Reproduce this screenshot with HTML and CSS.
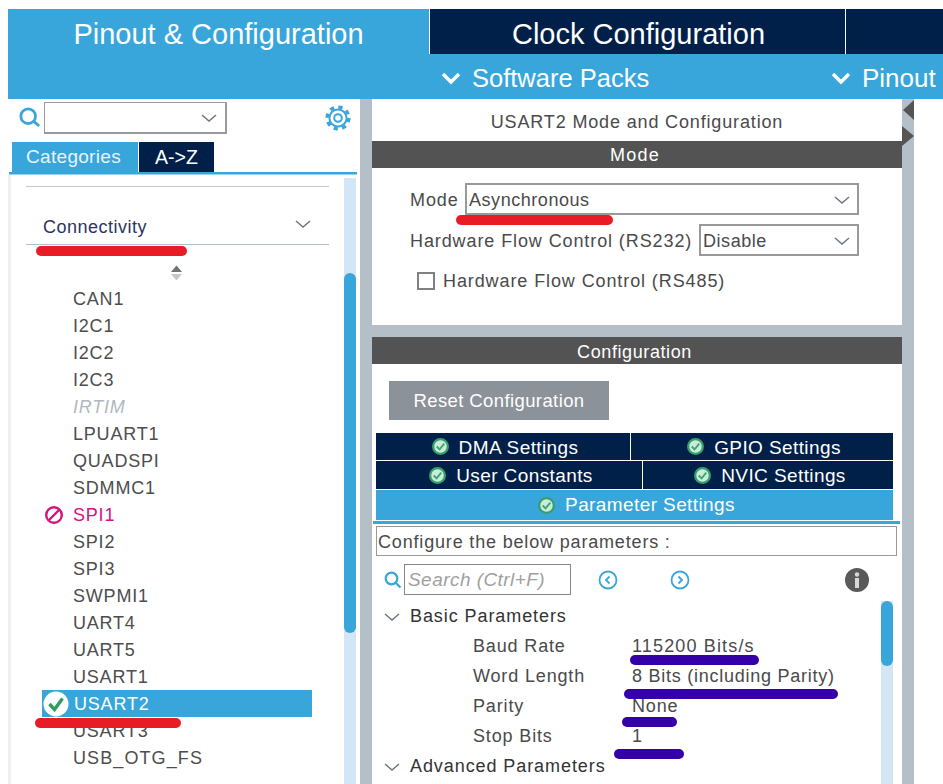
FILE: index.html
```html
<!DOCTYPE html>
<html lang="en">
<head>
<meta charset="utf-8">
<title>USART2 Mode and Configuration</title>
<link rel="stylesheet" href="styles.css">
</head>
<body>
<div class="app">
  <header class="topbar">
    <div class="tabs-main">
      <div class="tab-main tab-active">Pinout &amp; Configuration</div>
      <div class="tab-main tab-clock">Clock Configuration</div>
      <div class="tab-main tab-rest"></div>
    </div>
    <div class="subbar">
      <div class="sub-item sub-packs">
        <svg class="sub-chev" viewBox="0 0 20 14"><path d="M2 3l8 8 8-8" /></svg>
        <span>Software Packs</span>
      </div>
      <div class="sub-item sub-pinout">
        <svg class="sub-chev" viewBox="0 0 20 14"><path d="M2 3l8 8 8-8" /></svg>
        <span>Pinout</span>
      </div>
    </div>
  </header>
  <main class="workspace">
    <aside class="left">
      <div class="search-row">
        <svg class="search-icon" viewBox="0 0 24 24"><circle cx="10" cy="10" r="8" /><path d="M15.5 15.5l6.5 5" /></svg>
        <div class="search-box"><svg class="chev" viewBox="0 0 16 10"><path d="M1 2l7 6 7-6" /></svg></div>
        <svg class="gear" viewBox="0 0 26 26">
          <circle class="gear-teeth" cx="13" cy="13" r="10.9" />
          <circle cx="13" cy="13" r="8.6" />
          <circle cx="13" cy="13" r="3.8" />
        </svg>
      </div>
      <div class="cat-tabs">
        <div class="cat-tab cat-active">Categories</div>
        <div class="cat-tab cat-az">A-&gt;Z</div>
      </div>
      <div class="cat-line"></div>
      <div class="list-wrap">
        <div class="list-main">
          <div class="rule rule-top"></div>
          <div class="group-head">
            <span>Connectivity</span>
            <svg class="chev" viewBox="0 0 16 10"><path d="M1 2l7 6 7-6" /></svg>
          </div>
          <div class="sorter">
            <svg viewBox="0 0 14 16"><path class="up" d="M7 0l6 7H1z" /><path class="down" d="M1 9h12l-6 7z" /></svg>
          </div>
          <ul class="periph">
            <li>CAN1</li>
            <li>I2C1</li>
            <li>I2C2</li>
            <li>I2C3</li>
            <li class="off">IRTIM</li>
            <li>LPUART1</li>
            <li>QUADSPI</li>
            <li>SDMMC1</li>
            <li class="blocked">
              <svg class="no-icon" viewBox="0 0 20 20"><circle cx="10" cy="10" r="7.8" /><path d="M5 15L15 5" /></svg>
              SPI1
            </li>
            <li>SPI2</li>
            <li>SPI3</li>
            <li>SWPMI1</li>
            <li>UART4</li>
            <li>UART5</li>
            <li>USART1</li>
            <li class="selected">
              <svg class="ok-icon" viewBox="0 0 26 26"><circle cx="13" cy="13" r="12.5" /><path d="M6.5 13l5 5.5 8-11" /></svg>
              USART2
            </li>
            <li>USART3</li>
            <li class="wide">USB_OTG_FS</li>
          </ul>
        </div>
        <div class="track left-track"><div class="thumb left-thumb"></div></div>
      </div>
    </aside>

    <section class="center">
      <div class="panel panel-mode">
        <h1 class="panel-title">USART2 Mode and Configuration</h1>
        <div class="bar bar-mode">Mode</div>
        <div class="mode-form">
          <div class="form-row">
            <span>Mode</span>
            <div class="select select-wide">Asynchronous<svg class="chev" viewBox="0 0 16 10"><path d="M1 2l7 6 7-6" /></svg></div>
          </div>
          <div class="form-row">
            <span>Hardware Flow Control (RS232)</span>
            <div class="select select-small">Disable<svg class="chev" viewBox="0 0 16 10"><path d="M1 2l7 6 7-6" /></svg></div>
          </div>
          <div class="check-row"><span class="checkbox"></span><span>Hardware Flow Control (RS485)</span></div>
        </div>
      </div>
      <div class="panel panel-config">
        <div class="bar bar-config">Configuration</div>
        <button class="reset" type="button">Reset Configuration</button>
        <div class="cfg-tabs">
          <div class="cfg-row">
            <div class="cfg-tab w-dma"><svg class="mini-ok" viewBox="0 0 18 18"><circle cx="9" cy="9" r="7.8" /><path d="M5 9l3 3 5-6" /></svg>DMA Settings</div>
            <div class="cfg-tab cfg-grow"><svg class="mini-ok" viewBox="0 0 18 18"><circle cx="9" cy="9" r="7.8" /><path d="M5 9l3 3 5-6" /></svg>GPIO Settings</div>
          </div>
          <div class="cfg-row cfg-row2">
            <div class="cfg-tab w-user"><svg class="mini-ok" viewBox="0 0 18 18"><circle cx="9" cy="9" r="7.8" /><path d="M5 9l3 3 5-6" /></svg>User Constants</div>
            <div class="cfg-tab cfg-grow"><svg class="mini-ok" viewBox="0 0 18 18"><circle cx="9" cy="9" r="7.8" /><path d="M5 9l3 3 5-6" /></svg>NVIC Settings</div>
          </div>
          <div class="cfg-tab cfg-active"><svg class="mini-ok" viewBox="0 0 18 18"><circle cx="9" cy="9" r="7.8" /><path d="M5 9l3 3 5-6" /></svg>Parameter Settings</div>
        </div>
        <div class="cfg-line"></div>
        <div class="hint">Configure the below parameters :</div>
        <div class="tools">
          <svg class="search-small" viewBox="0 0 18 18"><circle cx="7.5" cy="7.5" r="5.8" /><path d="M11.5 11.5l5 5" /></svg>
          <div class="param-search">Search (Ctrl+F)</div>
          <svg class="nav nav-prev" viewBox="0 0 20 20"><circle cx="10" cy="10" r="8.5" /><path d="M11.5 6.5L8 10l3.5 3.5" /></svg>
          <svg class="nav nav-next" viewBox="0 0 20 20"><circle cx="10" cy="10" r="8.5" /><path d="M8.5 6.5L12 10l-3.5 3.5" /></svg>
          <svg class="info" viewBox="0 0 24 24"><circle cx="12" cy="12" r="12" /><rect x="10" y="10" width="4" height="10" /><circle cx="12" cy="6.5" r="2.2" /></svg>
        </div>
        <div class="params">
          <div class="tree">
            <div class="tree-head"><svg class="chev" viewBox="0 0 16 10"><path d="M1 2l7 6 7-6" /></svg>Basic Parameters</div>
            <div class="param"><span>Baud Rate</span><span class="num">115200 Bits/s</span></div>
            <div class="param"><span>Word Length</span><span class="tight">8 Bits (including Parity)</span></div>
            <div class="param"><span>Parity</span><span>None</span></div>
            <div class="param"><span>Stop Bits</span><span>1</span></div>
            <div class="tree-head"><svg class="chev" viewBox="0 0 16 10"><path d="M1 2l7 6 7-6" /></svg>Advanced Parameters</div>
          </div>
          <div class="track param-track"><div class="thumb param-thumb"></div></div>
        </div>
      </div>
    </section>

    <div class="gutter-right">
      <svg viewBox="0 0 12 20"><path d="M12 0v20L1 10z" /></svg>
      <svg viewBox="0 0 12 20"><path d="M0 0v20l12-10z" /></svg>
    </div>
  </main>
</div>
<div class="mark red m-connect"></div>
<div class="mark red m-mode"></div>
<div class="mark red m-usart"></div>
<div class="mark blue m-baud"></div>
<div class="mark blue m-word"></div>
<div class="mark blue m-parity"></div>
<div class="mark blue m-stop"></div>
</body>
</html>
```
FILE: styles.css
```css
* { box-sizing: border-box; }
html, body { margin: 0; height: 784px; overflow: hidden; background: #fff; }
body { font-family: "Liberation Sans", Arial, sans-serif; color: #4a4a4a; position: relative; }
.app { padding: 9px 0 0 8px; height: 784px; display: flex; flex-direction: column; }

.topbar { background: #38a6db; height: 90px; flex: none; }
.tabs-main { display: flex; height: 45px; }
.tab-main { font-size: 29px; color: #fff; line-height: 50px; text-align: center; white-space: nowrap; overflow: hidden; }
.tab-active { width: 421px; line-height: 50px; }
.tab-clock { width: 417px; padding-left: 2px; background: #00204a; border-left: 1px solid #fff; border-right: 1px solid #fff; }
.tab-rest { flex: 1; background: #00204a; }
.subbar { height: 45px; position: relative; display: flex; color: #fff; }
.sub-item { display: flex; align-items: center; gap: 11px; height: 50px; margin-top: -1px; }
.sub-packs { margin-left: 433px; width: 390px; font-size: 25.5px; }
.sub-pinout { font-size: 26px; }
.sub-chev { width: 20px; height: 14px; fill: none; stroke: #fff; stroke-width: 3.4; }

.workspace { flex: 1; display: flex; min-height: 0; background: #fff; }
.left { width: 352px; flex: none; display: flex; flex-direction: column; }

.search-row { height: 43px; display: flex; align-items: flex-start; padding: 3px 0 0 11px; }
.search-icon { width: 22px; height: 24px; margin-top: 4px; fill: none; stroke: #38a6db; stroke-width: 3; }
.search-box { width: 183px; height: 32px; margin-left: 3px; border: 1px solid #9a9a9a; border-right-width: 2px; border-bottom-width: 2px; display: flex; align-items: center; justify-content: flex-end; padding-right: 8px; }
.chev { width: 16px; height: 10px; fill: none; stroke: #6f7680; stroke-width: 1.5; }
.gear { width: 26px; height: 26px; margin: 3px 0 0 98px; fill: none; stroke: #38a6db; stroke-width: 2; }
.gear-teeth { stroke-width: 3.4; stroke-dasharray: 4.28 4.28; }

.cat-tabs { display: flex; height: 30px; margin-left: 4px; flex: none; }
.cat-tab { font-size: 19px; line-height: 30px; text-align: center; color: #fff; }
.cat-active { width: 126px; padding-right: 3px; letter-spacing: .3px; background: #38a6db; color: #e8f4fb; }
.cat-az { width: 75px; margin-left: 1px; font-size: 19.5px; background: #00204a; }
.cat-line { height: 3px; background: #38a6db; margin: 0 3px 0 1px; border-bottom: 1px solid #9dd0ec; flex: none; }

.list-wrap { flex: 1; display: flex; min-height: 0; padding-top: 3px; border-left: 3px solid #f0f0f0; }
.list-main { width: 333px; flex: none; padding: 8px 0 0 15px; }
.rule { height: 1px; }
.rule-top { background: #c8c8c8; width: 303px; }
.group-head { width: 303px; height: 58px; border-bottom: 1px solid #b7bdd0; display: flex; align-items: flex-end; justify-content: space-between; padding: 0 18px 6px 17px; font-size: 18px; letter-spacing: .5px; line-height: 22px; color: #2a3560; }
.group-head .chev { margin-bottom: 9px; }
.sorter { width: 303px; height: 40px; padding: 20px 0 0 144px; }
.sorter svg { display: block; width: 13px; height: 16px; }
.up { fill: #6e7377; }
.down { fill: #c4c7ca; }

.periph { list-style: none; margin: 0; padding: 0 0 0 16px; }
.periph li { height: 27px; padding: 2px 0 0 31px; font-size: 18px; letter-spacing: .8px; position: relative; width: 270px; display: flex; align-items: center; color: #4d4d4d; white-space: nowrap; }
.periph .wide { letter-spacing: 1.1px; }
.periph .off { font-style: italic; color: #b0b8bf; }
.periph .blocked { color: #d5127f; }
.periph .selected { background: #38a6db; color: #fff; padding-left: 32px; }
.no-icon { position: absolute; left: 2px; top: 4px; width: 20px; height: 20px; fill: none; stroke: #d5127f; stroke-width: 2.4; }
.ok-icon { position: absolute; left: 1px; top: 1px; width: 26px; height: 26px; }
.ok-icon circle { fill: #fff; }
.ok-icon path { fill: none; stroke: #2f9e5f; stroke-width: 3.4; }

.track { background: #d4e6f5; width: 12px; flex: none; }
.thumb { background: #38a6db; border-radius: 6px; width: 12px; }
.left-thumb { height: 360px; margin-top: 95px; }

.center { width: 542px; flex: none; background: #b4bfc7; padding-left: 12px; display: flex; flex-direction: column; gap: 12px; }
.panel { background: #fff; width: 530px; }
.panel-mode { height: 226px; flex: none; }
.panel-title { margin: 0; height: 42px; font-size: 18px; font-weight: 400; line-height: 46px; text-align: center; letter-spacing: .85px; color: #4a4a4a; }
.bar { height: 27px; background: #535353; color: #fff; font-size: 18px; line-height: 29px; text-align: center; }
.bar-mode { letter-spacing: 1.2px; padding-right: 4px; }
.bar-config { letter-spacing: .6px; padding-right: 5px; line-height: 31px; }
.mode-form { padding: 15px 43px 0 38px; }
.form-row { display: flex; justify-content: space-between; align-items: center; height: 32px; margin-bottom: 9px; font-size: 18px; letter-spacing: .9px; }
.form-row > span { padding-top: 2px; }
.select { height: 32px; border: 2px solid #999; display: flex; align-items: center; justify-content: space-between; padding: 2px 7px 0 2px; letter-spacing: .55px; background: #fff; }
.select-wide { width: 394px; }
.select-small { width: 160px; }
.check-row { display: flex; align-items: center; gap: 8px; margin: 15px 0 0 7px; font-size: 18px; letter-spacing: .9px; height: 20px; }
.checkbox { width: 18px; height: 18px; border: 2px solid #808080; }

.panel-config { flex: 1; min-height: 0; overflow: hidden; position: relative; }
.reset { display: block; width: 220px; height: 39px; margin: 17px 0 13px 17px; background: #8b9299; border: 0; color: #fff; font: 18.5px "Liberation Sans", Arial, sans-serif; letter-spacing: .4px; padding: 0; }
.cfg-tabs { margin-left: 4px; width: 517px; }
.cfg-row { display: flex; height: 28px; border-bottom: 1px solid #fff; }
.cfg-row2 { height: 29px; }
.cfg-tab { background: #00204a; color: #fff; font-size: 19px; letter-spacing: .4px; padding: 2px 0 0 4px; display: flex; align-items: center; justify-content: center; white-space: nowrap; }
.w-dma { width: 255px; border-right: 1px solid #fff; }
.w-user { width: 267px; border-right: 1px solid #fff; }
.cfg-grow { flex: 1; }
.cfg-active { background: #38a6db; height: 30px; padding-top: 0; }
.mini-ok { width: 17px; height: 17px; margin: -2px 10px 0 0; }
.cfg-active .mini-ok { margin-top: 0; }
.mini-ok circle { fill: #cdebdb; stroke: #35a06c; stroke-width: 2.4; }
.mini-ok path { fill: none; stroke: #3aa873; stroke-width: 2; }
.cfg-line { height: 3px; margin: 1px 2px 0 1px; background: #38a6db; }
.hint { width: 521px; height: 30px; margin: 2px 0 0 4px; border: 1px solid #999; font-size: 18px; letter-spacing: .83px; line-height: 30px; padding-left: 1px; color: #4a4a4a; white-space: nowrap; overflow: hidden; }
.tools { display: flex; align-items: center; height: 31px; margin-top: 8px; padding-left: 12px; }
.search-small { width: 18px; height: 18px; fill: none; stroke: #38a6db; stroke-width: 2.2; }
.param-search { width: 167px; height: 31px; margin-left: 2px; border: 1px solid #888; font-size: 19px; letter-spacing: .45px; font-style: italic; color: #a0a0a0; line-height: 30px; padding-left: 3px; white-space: nowrap; }
.nav { width: 20px; height: 20px; fill: none; stroke: #38a6db; stroke-width: 1.8; }
.nav-prev { margin-left: 27px; }
.nav-next { margin-left: 52px; }
.info { width: 24px; height: 24px; margin-left: 155px; fill: #d8d8d8; }
.info circle:first-child { fill: #5a5a5a; }
.params { display: flex; margin-top: 6px; height: 200px; }
.tree { width: 509px; padding-left: 12px; font-size: 18px; letter-spacing: .85px; }
.tree-head { height: 30px; display: flex; align-items: center; gap: 10px; color: #333; padding-top: 1px; letter-spacing: .92px; }
.tree-head .chev { width: 16px; }
.param { height: 30px; display: flex; align-items: center; padding: 1px 0 0 89px; }
.param span:first-child { width: 159px; }
.param .num { letter-spacing: 1.15px; }
.param .tight { letter-spacing: .75px; }
.param-track { height: 200px; }
.param-thumb { height: 65px; }

.gutter-right { width: 12px; flex: none; background: #b4bfc7; display: flex; flex-direction: column; gap: 6px; padding-top: 1px; }
.gutter-right svg { display: block; width: 12px; height: 20px; fill: #555; }

.mark { position: absolute; border-radius: 5px; height: 10px; }
.red { background: #e81c24; }
.blue { background: #3500a8; }
.m-connect { left: 36px; top: 246px; width: 151px; }
.m-mode { left: 456px; top: 215px; width: 157px; }
.m-usart { left: 35px; top: 718px; width: 146px; }
.m-baud { left: 630px; top: 655px; width: 129px; }
.m-word { left: 624px; top: 689px; width: 214px; }
.m-parity { left: 622px; top: 717px; width: 55px; }
.m-stop { left: 614px; top: 749px; width: 70px; }
```
